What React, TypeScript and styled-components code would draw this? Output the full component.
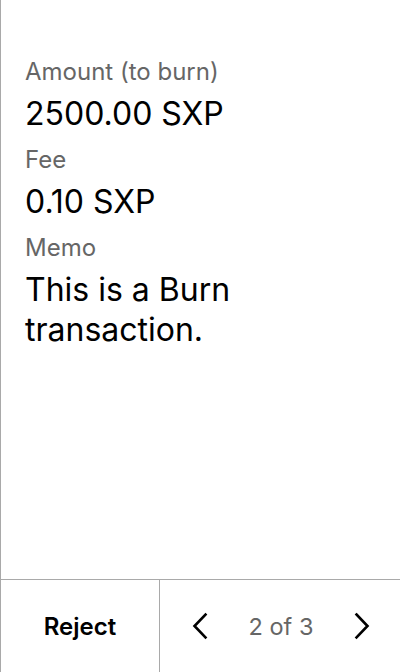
import React from "react";
import styled, { createGlobalStyle } from "styled-components";

const Global = createGlobalStyle`
  html, body, #root { height: 100%; }
  body {
    margin: 0;
    background: #fff;
    font-family: Inter, "Noto Sans", "Liberation Sans", sans-serif;
    -webkit-font-smoothing: antialiased;
  }
  * { box-sizing: border-box; }
`;

const Screen = styled.div`
  display: flex;
  flex-direction: column;
  height: 100vh;
  border-left: 1px solid #a9a9a9;
  background: #fff;
`;

const Content = styled.div`
  flex: 1;
  display: flex;
  flex-direction: column;
  gap: 11px;
  padding: 57px 24px 0 24px;
`;

const Field = styled.div`
  display: flex;
  flex-direction: column;
  gap: 7px;
`;

const Label = styled.div`
  font-size: 24px;
  line-height: 30px;
  color: #666666;
  font-weight: 400;
`;

const Value = styled.div`
  font-size: 32px;
  line-height: 40px;
  color: #000;
  font-weight: 400;
  max-width: 300px;
`;

const Footer = styled.div`
  height: 93px;
  display: grid;
  grid-template-columns: 159px 1fr;
  border-top: 1px solid #a9a9a9;
`;

const RejectButton = styled.button`
  border: none;
  border-right: 1px solid #a9a9a9;
  background: transparent;
  font-family: inherit;
  font-size: 24px;
  font-weight: 600;
  color: #000;
  display: flex;
  align-items: center;
  justify-content: center;
  padding: 0;
`;

const Pager = styled.div`
  display: flex;
  align-items: center;
  justify-content: space-between;
  padding: 0 26px 0 28px;
`;

const NavButton = styled.button`
  width: 24px;
  height: 30px;
  border: none;
  background: transparent;
  padding: 0;
  display: flex;
  align-items: center;
  justify-content: center;
`;

const PageText = styled.span`
  font-size: 23.5px;
  color: #666666;
  font-weight: 400;
`;

const Chevron = ({ dir }: { dir: "left" | "right" }) => (
  <svg width="16" height="28" viewBox="0 0 16 28" fill="none">
    <path
      d={dir === "left" ? "M13.5 2.5 L2.5 14 L13.5 25.5" : "M2.5 2.5 L13.5 14 L2.5 25.5"}
      stroke="#000"
      strokeWidth="2.6"
      strokeLinecap="square"
      strokeLinejoin="miter"
    />
  </svg>
);

const fields = [
  { label: "Amount (to burn)", value: "2500.00 SXP" },
  { label: "Fee", value: "0.10 SXP" },
  { label: "Memo", value: "This is a Burn transaction." },
];

export default function App() {
  return (
    <>
      <Global />
      <Screen>
        <Content>
          {fields.map((f) => (
            <Field key={f.label}>
              <Label>{f.label}</Label>
              <Value>{f.value}</Value>
            </Field>
          ))}
        </Content>
        <Footer>
          <RejectButton>Reject</RejectButton>
          <Pager>
            <NavButton aria-label="Previous">
              <Chevron dir="left" />
            </NavButton>
            <PageText>2 of 3</PageText>
            <NavButton aria-label="Next">
              <Chevron dir="right" />
            </NavButton>
          </Pager>
        </Footer>
      </Screen>
    </>
  );
}
